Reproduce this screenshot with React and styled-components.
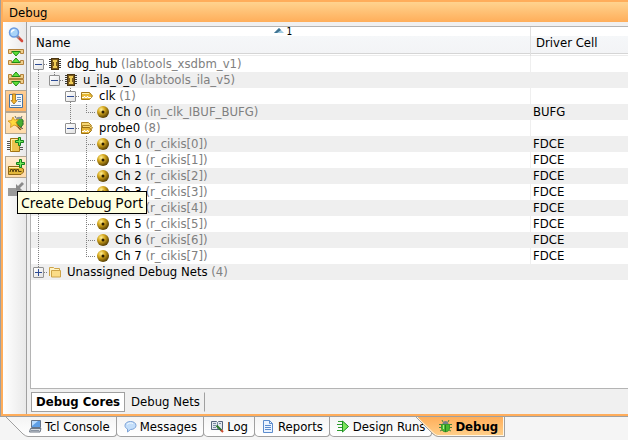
import React, { useState } from "react";
import styled, { createGlobalStyle, css } from "styled-components";

const GlobalStyle = createGlobalStyle`
  *, *::before, *::after { box-sizing: border-box; }
  body {
    margin: 0;
    background: #f5f5f5;
    color: #000;
    font-family: "DejaVu Sans Condensed", "Noto Sans", sans-serif;
    font-size: 13px;
    line-height: 16px;
    overflow: hidden;
  }
  #root { min-height: 100vh; }
`;

const Screen = styled.div`
  height: 100vh;
  display: flex;
  flex-direction: column;
`;

const Panel = styled.section`
  flex: 1;
  min-height: 0;
  display: flex;
  flex-direction: column;
  border-left: 1px solid #a0a0a0;
  border-bottom: 1px solid #a0a0a0;
`;

const Frame = styled.div`
  flex: 1;
  min-height: 0;
  display: flex;
  flex-direction: column;
  border: solid #ffad5b;
  border-width: 2px 0 2px 2px;
`;

const Title = styled.h1`
  margin: 0;
  height: 20px;
  padding: 2px 6px;
  font-size: 13px;
  font-weight: normal;
  line-height: 17px;
  background: linear-gradient(#ffd38f, #ffae5a);
`;

const Body = styled.div`
  flex: 1;
  min-height: 0;
  display: flex;
`;

const Toolbar = styled.nav`
  width: 24px;
  padding: 2px 0 0 2px;
  display: flex;
  flex-direction: column;
  background: linear-gradient(90deg, #fff, #e9e9e9);
  border-right: 1px solid #a0a0a0;
`;

const ToolButton = styled.button`
  height: 22px;
  padding: 0;
  display: flex;
  align-items: center;
  justify-content: center;
  border: 1px solid transparent;
  background: none;
  ${(p) =>
    p.$tone &&
    css`
      border-color: #b5a68f;
      border-right: 0;
      background: ${p.$tone === "pressed" ? "linear-gradient(#ffcf96, #ffb566)" : "linear-gradient(#ffecd0, #ffdba8)"};
    `}
`;

const ToolSlot = styled.div`
  position: relative;
  display: flex;
  flex-direction: column;
`;

const Tooltip = styled.div`
  position: absolute;
  z-index: 2;
  top: 35px;
  left: 12px;
  padding: 0 3px;
  border: 1px solid #000;
  background: #ffffe1;
  font-family: "Noto Sans", sans-serif;
  font-size: 14px;
  line-height: 21px;
  white-space: nowrap;
`;

const Content = styled.main`
  flex: 1;
  min-width: 0;
  display: flex;
  flex-direction: column;
  padding: 4px 0 0 3px;
  background: #f0f0f0;
`;

const TreeBox = styled.div`
  flex: 1;
  min-height: 0;
  overflow: hidden;
  border: solid #b4b4b4;
  border-width: 1px 0 1px 1px;
  background: #fff;
`;

const Table = styled.table`
  width: 100%;
  table-layout: fixed;
  border-collapse: separate;
  border-spacing: 0;
`;

const NameCol = styled.col`
  width: 499px;
`;

const HeadCell = styled.th`
  position: relative;
  height: 29px;
  padding: 6px 5px 2px;
  text-align: left;
  font-weight: normal;
  vertical-align: top;
  background: linear-gradient(#fff 9px, #f5f7f9 9px, #f3f4f6 26px, #d5d5d5 26px, #d5d5d5 27px, #fff 27px, #fff 28px, #ececec 28px);

  & + & {
    border-left: 1px solid #e0e0e0;
  }
`;

const HeadLabel = styled.span`
  display: block;
  line-height: 20px;
`;

const SortMark = styled.span`
  position: absolute;
  top: 0;
  left: 50%;
  display: flex;
  align-items: flex-start;
  gap: 3px;
  margin-left: -7px;
  font-size: 10px;
  line-height: 10px;
`;

const Row = styled.tr`
  height: 16px;
  background: #fff;

  &:nth-child(even) {
    background: #efefef;
  }
`;

const NameCell = styled.td`
  padding: 0;
`;

const DriverCell = styled.td`
  padding: 0 2px;
  line-height: 16px;
  border-left: 1px solid #efefef;
`;

const NameLine = styled.div`
  display: flex;
  height: 16px;
  white-space: pre;
`;

const dots = "repeating-linear-gradient(#808080 0 1px, transparent 1px 2px)";
const hdots = "repeating-linear-gradient(90deg, #808080 0 1px, transparent 1px 2px)";
const lineLength = { blank: "0", line: "100%", end: "9px", start: "8px" };

const Guide = styled.span`
  width: 16px;
  height: 16px;
  flex: none;
  display: flex;
  align-items: center;
  padding-left: 2px;
  background-repeat: no-repeat;
  background-image: ${(p) => (p.$v === "blank" ? "none" : dots)}${(p) => (p.$h ? `, ${hdots}` : "")};
  background-size: 1px ${(p) => lineLength[p.$v]}, 9px 1px;
  background-position: 7px ${(p) => (p.$v === "start" ? "8px" : "0")}, 7px 8px;
`;

const Expander = styled.button`
  width: 11px;
  height: 11px;
  padding: 0;
  display: flex;
  border: 1px solid #919191;
  border-radius: 1px;
  background: linear-gradient(135deg, #fff, #e2e2e2);
`;

const NodeIcon = styled.span`
  width: 16px;
  height: 16px;
  flex: none;
  display: flex;
  align-items: center;
  justify-content: center;
  margin-right: 4px;
`;

const Muted = styled.span`
  color: #808080;
`;

const ViewTabs = styled.div`
  display: flex;
  align-items: center;
  gap: 1px;
  padding: 3px 0 2px 1px;
`;

const ViewTab = styled.button`
  height: 20px;
  padding: 0 4px;
  border: 1px solid transparent;
  border-right-color: #a0a0a0;
  background: none;
  font: inherit;
  line-height: 18px;
  white-space: nowrap;
  ${(p) =>
    p.$active &&
    css`
      border-color: #a0a0a0;
      background: #fff;
      font-weight: bold;
    `}
`;

const DockTabs = styled.div`
  height: 23px;
  display: flex;
  align-items: flex-start;
  padding-left: 6px;
`;

const DockTab = styled.button`
  height: 20px;
  margin-left: -1px;
  padding: 0 6px 0 7px;
  display: flex;
  align-items: center;
  gap: 3px;
  border: 1px solid #a0a0a0;
  border-top: 0;
  border-radius: 0 0 4px 5px;
  background: linear-gradient(#f4f4f4, #fff);
  font: inherit;
  white-space: nowrap;
  ${(p) =>
    p.$slanted &&
    css`
      margin-left: 0;
      border-left: 0;
      border-radius: 0 0 4px 0;
      padding-left: 1px;
    `}
  ${(p) =>
    p.$active &&
    css`
      font-weight: bold;
      border-radius: 0 0 1px 0;
      background: linear-gradient(#ffae5a, #ffd08a);
      box-shadow: inset -1px -1px #fff6e6;
    `}
`;

const SlantSvg = styled.svg`
  flex: none;
  display: block;
  margin-left: ${(p) => (p.$overlap ? "-16px" : "0")};
  z-index: 1;
`;

const Svg = ({ s = 16, w = s, children, ...rest }) => (
  <svg width={w} height={s} viewBox={`0 0 ${w} ${s}`} aria-hidden="true" {...rest}>{children}</svg>
);

const SearchIcon = () => (
  <Svg>
    <path d="M9.500 9.500L14 14" stroke="#d44a3a" strokeWidth="2.600" strokeLinecap="round" />
    <path d="M9 9l2 2" stroke="#8a8f9a" strokeWidth="2" />
    <circle cx="6" cy="5.500" r="4.500" fill="#a9d4f8" stroke="#6c9be0" strokeWidth="1.500" />
    <path d="M3.500 5.500a2.600 2.600 0 0 1 3-2.500" stroke="#fff" strokeWidth="1.500" fill="none" />
  </Svg>
);

const CollapseIcon = () => (
  <Svg>
    <path d="M.5 .5h15v4h-3v-2h-9v2h-3z" fill="#f0cf8c" stroke="#b3823a" />
    <path d="M.5 15.500h15v-4h-3v2h-9v-2h-3z" fill="#f0cf8c" stroke="#b3823a" />
    <path d="M4 2.500h8L8 7z" fill="#5fe03a" stroke="#1f8a14" />
    <path d="M4 13.500h8L8 9z" fill="#5fe03a" stroke="#1f8a14" />
  </Svg>
);

const ExpandIcon = () => (
  <Svg>
    <path d="M.5 3.500h3v2h9v-2h3v4H.5z" fill="#f0cf8c" stroke="#b3823a" />
    <path d="M.5 12.500h3v-2h9v2h3v-4H.5z" fill="#f0cf8c" stroke="#b3823a" />
    <path d="M4 5.500h8L8 1z" fill="#5fe03a" stroke="#1f8a14" />
    <path d="M4 10.500h8L8 15z" fill="#5fe03a" stroke="#1f8a14" />
  </Svg>
);

const SelectIcon = () => (
  <Svg>
    <path d="M1.500 1.500h13v13h-13z" fill="#f4f8fc" stroke="#4675a6" />
    <path d="M9 4.500h4M9 6.500h4M10 8.500h3M3 12.500h10" stroke="#6e93bd" />
    <path d="M4.500 1v6.500H3L6 11l3-3.500H7.500V1z" fill="#f6b82c" stroke="#a36b11" strokeWidth=".8" />
  </Svg>
);

const WandIcon = () => (
  <Svg>
    <path d="M8 3L7 1M13 3l1-2M14 6h2M14 9h2M13 12l2 2" stroke="#68706c" />
    <ellipse cx="11.500" cy="7.500" rx="3.500" ry="5" fill="#48ad31" stroke="#277a20" />
    <path d="M8 4c0-3 6-3 6 0z" fill="#8b929a" />
    <path d="M7 8l6 6.500" stroke="#76501f" strokeWidth="2.400" />
    <path d="M8 9l5 5" stroke="#c99a55" />
    <path d="M5 2l1.500 3 4-.5L8 7.500l2 4-4-1.500-3.500 2.500L3 8.500 0 6l3.500-.5z" fill="#ffd83d" stroke="#cf8e17" strokeWidth=".8" />
  </Svg>
);

const Plus = () => (
  <path d="M11.500 .5h2v3h3v2h-3v3h-2v-3h-3v-2h3z" fill="#6fe85a" stroke="#12801a" />
);

const CoreIcon = () => (
  <Svg w={17}>
    <path d="M0 4.500h3M0 6.500h3M0 8.500h3M0 10.500h3M0 12.500h3M12 10.500h4M12 12.500h4" stroke="#555" />
    <path d="M3.500 1.500h9v13h-9z" fill="#edc34d" stroke="#a27514" />
    <path d="M4.500 14V2.500H10" stroke="#fff0a8" fill="none" />
    <Plus />
  </Svg>
);

const PortIcon = () => (
  <Svg w={17}>
    <path d="M.5 15.500v-8h11l4 2.500v3l-2.500 2.500z" fill="#e2b63b" stroke="#8f6715" />
    <path d="M1 8.500h10" stroke="#fff0a8" />
    <path d="M1.500 12.500h1v-2h2v2h1v-2h2v2h1v-2h2v2h3" stroke="#5b430f" fill="none" />
    <Plus />
  </Svg>
);

const DisabledIcon = () => (
  <Svg>
    <path d="M0 7h8l4 2 4 1v5H0z" fill="#9a9a9a" />
    <path d="M8 9V3l2 2 4-4 2 2-4 4 2 2z" fill="#8a8a8a" />
  </Svg>
);

const ChipIcon = () => (
  <Svg s={14}>
    <path d="M1 2.500h12M1 4.500h12M1 6.500h12M1 8.500h12M1 10.500h12" stroke="#3c3c3c" />
    <path d="M3 1h8v12H3z" fill="#4b3511" />
    <path d="M4 2h6v10H4z" fill="#7a5a1c" />
    <path d="M5 3h4v2H8v4h1v2H5V9h1V5H5z" fill="#f0cc55" />
  </Svg>
);

const ClkIcon = () => (
  <Svg s={14}>
    <path d="M1.500 3.500h8l3 3.500-3 3.500h-8z" fill="#e8b935" stroke="#a47a17" />
    <path d="M2 8.500h2v-1h1v1h2v-1h1v1h3" stroke="#fff" fill="none" />
    <path d="M2 4.500h7" stroke="#fff2ae" />
  </Svg>
);

const ProbeIcon = () => (
  <Svg s={14}>
    <path d="M1.500 1.500h7l3 3-2 2h-8zM2.500 4.500h7l3 2-2 3h-8z" fill="#f7d774" stroke="#b08524" />
    <path d="M1.500 6.500h8l2 3-3 3h-7z" fill="#e6b435" stroke="#9a7014" />
    <path d="M2 10.500h2v-1h1v1h2v-1h1v1h1" stroke="#fff" fill="none" />
  </Svg>
);

const NetIcon = () => (
  <Svg s={14}>
    <defs>
      <radialGradient id="gold" cx=".35" cy=".3" r=".75">
        <stop offset="0" stopColor="#ffef9a" />
        <stop offset=".4" stopColor="#d6a81d" />
        <stop offset="1" stopColor="#4d3600" />
      </radialGradient>
    </defs>
    <circle cx="7" cy="7" r="6" fill="url(#gold)" />
    <circle cx="7" cy="7" r="1.500" fill="#2c1e00" />
  </Svg>
);

const FolderIcon = () => (
  <Svg s={14}>
    <path d="M1.500 11V2.500h4l1 1h5V6" fill="#fff3c4" stroke="#cda348" />
    <path d="M3.500 5.500h9v6.500h-9z" fill="#fbdc87" stroke="#cda348" />
  </Svg>
);

const ConsoleIcon = () => (
  <Svg s={13}>
    <path d="M2.500 .5h9v7h-9z" fill="#5f9fe6" stroke="#66758a" />
    <path d="M3 1h6L3 6z" fill="#b9dcff" />
    <path d="M1.500 8.500h10.500l-1 3.500H.5z" fill="#d5dae0" stroke="#6d7785" />
    <path d="M2 10.500h8" stroke="#8b95a3" />
  </Svg>
);

const MessageIcon = () => (
  <Svg s={13}>
    <path d="M6.500 1.500c3.300 0 5.500 1.700 5.500 4s-2.200 4-5.500 4L3.500 12V9C1.800 8.300 1 7 1 5.500c0-2.300 2.200-4 5.500-4z" fill="#c3defa" stroke="#7ba1d6" />
    <path d="M3 4.500c1-1.500 4-2 6-1" stroke="#f4faff" fill="none" />
  </Svg>
);

const LogIcon = () => (
  <Svg s={13}>
    <path d="M.5 1.500h5l1 1 1-1h4v8H.5z" fill="#e3e8ee" stroke="#56657c" />
    <path d="M6.500 2v7M2 3.500h3M2 5.500h3M2 7.500h3M8 3.500h2" stroke="#7a8ba4" />
    <path d="M5.500 5.500l5 5" stroke="#28752b" strokeWidth="2" />
    <path d="M10 10l2 2" stroke="#c9472d" strokeWidth="2" />
  </Svg>
);

const ReportIcon = () => (
  <Svg s={13}>
    <path d="M1.500 .5h6l3 3v9h-9z" fill="#eaf3ff" stroke="#5c8ccd" />
    <path d="M7.500 .5v3h3M3 5.500h6M3 7.500h6M3 9.500h6" stroke="#5c8ccd" fill="none" />
  </Svg>
);

const RunsIcon = () => (
  <Svg s={13}>
    <path d="M1 1.500h5M0 4.500h5M1 7.500h4M0 10.500h5" stroke="#2c9a2b" />
    <path d="M5.500 1L11.500 6.500l-6 5.500z" fill="#7be65a" stroke="#1c8f22" />
  </Svg>
);

const BugIcon = () => (
  <Svg s={13}>
    <path d="M0 4.500h3M13 4.500h-3M0 7.500h3M13 7.500h-3M1 11l2-1M12 11l-2-1M4 2L3 0M9 2l1-2" stroke="#4b7d3f" />
    <path d="M3.500 4c0-4 6-4 6 0z" fill="#777f88" />
    <path d="M2.500 4.500h8v3.500c0 5-8 5-8 0z" fill="#49b82e" stroke="#3a9a2b" />
    <path d="M6.500 5v7" stroke="#267b1d" />
    <path d="M4.500 5v4" stroke="#a6ee8a" />
  </Svg>
);

const SortIcon = () => (
  <Svg s={8} w={10}>
    <path d="M0 6L5 1l5 5z" fill="#9fcbe2" />
    <path d="M0 6L5 1l2 2-4 3z" fill="#3f7391" />
  </Svg>
);

const tools = [
  { label: "Find", Icon: SearchIcon },
  { label: "Collapse All", Icon: CollapseIcon },
  { label: "Expand All", Icon: ExpandIcon },
  { label: "Scroll to Selected", Icon: SelectIcon, tone: "pressed" },
  { label: "Set Up Debug", Icon: WandIcon, tone: "warm" },
  { label: "Create Debug Core", Icon: CoreIcon },
  { label: "Create Debug Port", Icon: PortIcon, tone: "warm", tip: true },
  { label: "Disconnect Debug Net", Icon: DisabledIcon },
];

const probes = Array.from({ length: 8 }, (_, i) => ({
  guides: ["line", "blank", "blank"],
  last: i === 7 ? "end" : "line",
  Icon: NetIcon,
  name: `Ch ${i}`,
  note: `(r_cikis[${i}])`,
  cell: "FDCE",
}));

const rows = [
  { guides: [], last: "start", toggle: "open", Icon: ChipIcon, name: "dbg_hub", note: "(labtools_xsdbm_v1)" },
  { guides: ["line"], last: "end", toggle: "open", Icon: ChipIcon, name: "u_ila_0_0", note: "(labtools_ila_v5)" },
  { guides: ["line", "blank"], last: "line", toggle: "open", Icon: ClkIcon, name: "clk", note: "(1)" },
  { guides: ["line", "blank", "line"], last: "end", Icon: NetIcon, name: "Ch 0", note: "(in_clk_IBUF_BUFG)", cell: "BUFG" },
  { guides: ["line", "blank"], last: "end", toggle: "open", Icon: ProbeIcon, name: "probe0", note: "(8)" },
  ...probes,
  { guides: [], last: "end", toggle: "closed", Icon: FolderIcon, name: "Unassigned Debug Nets", note: "(4)" },
];

const dockTabs = [
  { label: "Tcl Console", Icon: ConsoleIcon, slanted: true },
  { label: "Messages", Icon: MessageIcon },
  { label: "Log", Icon: LogIcon },
  { label: "Reports", Icon: ReportIcon },
  { label: "Design Runs", Icon: RunsIcon },
  { label: "Debug", Icon: BugIcon, slanted: true },
];

const Slant = ({ active, overlap }) => (
  <SlantSvg width="22" height="20" viewBox="0 0 22 20" $overlap={overlap} aria-hidden="true">
    <defs>
      <linearGradient id={active ? "slantOn" : "slantOff"} x2="0" y2="1">
        <stop offset="0" stopColor={active ? "#ffae5a" : "#f4f4f4"} />
        <stop offset="1" stopColor={active ? "#ffd08a" : "#ffffff"} />
      </linearGradient>
    </defs>
    <path d="M0 0l17 17q3 2.500 5 2.500V0z" fill={`url(#${active ? "slantOn" : "slantOff"})`} />
    {active && <path d="M1 0l17 16.500q2 2 4 2" fill="none" stroke="#fff6e6" />}
    <path d="M0 0l17 17q3 2.500 5 2.500" fill="none" stroke="#a0a0a0" />
  </SlantSvg>
);

function TreeRow({ guides, last, toggle, Icon, name, note, cell }) {
  return (
    <Row>
      <NameCell>
        <NameLine>
          {guides.map((v, i) => <Guide key={i} $v={v} />)}
          <Guide $v={last} $h>
            {toggle && (
              <Expander aria-label={`Toggle ${name}`} aria-expanded={toggle === "open"}>
                <Svg s={9}>
                  <path d={toggle === "open" ? "M1 4.500h7" : "M1 4.500h7M4.500 1v7"} stroke="#2e4c94" />
                </Svg>
              </Expander>
            )}
          </Guide>
          <NodeIcon><Icon /></NodeIcon>
          <span>{name} <Muted>{note}</Muted></span>
        </NameLine>
      </NameCell>
      <DriverCell>{cell}</DriverCell>
    </Row>
  );
}

export default function App() {
  const [view, setView] = useState("Debug Cores");
  const [dock, setDock] = useState("Debug");
  return (
    <Screen>
      <GlobalStyle />
      <Panel>
        <Frame>
          <Title>Debug</Title>
          <Body>
            <Toolbar aria-label="Debug tools">
              {tools.map(({ label, Icon, tone, tip }) => (
                <ToolSlot key={label}>
                  <ToolButton aria-label={label} $tone={tone}><Icon /></ToolButton>
                  {tip && <Tooltip role="tooltip">{label}</Tooltip>}
                </ToolSlot>
              ))}
            </Toolbar>
            <Content>
              <TreeBox>
                <Table>
                  <colgroup><NameCol /><col /></colgroup>
                  <thead>
                    <tr>
                      <HeadCell scope="col">
                        <HeadLabel>Name</HeadLabel>
                        <SortMark><SortIcon />1</SortMark>
                      </HeadCell>
                      <HeadCell scope="col"><HeadLabel>Driver Cell</HeadLabel></HeadCell>
                    </tr>
                  </thead>
                  <tbody>
                    {rows.map((r, i) => <TreeRow key={i} {...r} />)}
                  </tbody>
                </Table>
              </TreeBox>
              <ViewTabs>
                {["Debug Cores", "Debug Nets"].map((t) => (
                  <ViewTab key={t} $active={view === t} onClick={() => setView(t)}>{t}</ViewTab>
                ))}
              </ViewTabs>
            </Content>
          </Body>
        </Frame>
      </Panel>
      <DockTabs>
        {dockTabs.map(({ label, Icon, slanted }, i) => (
          <React.Fragment key={label}>
            {slanted && <Slant active={dock === label} overlap={i > 0} />}
            <DockTab $slanted={slanted} $active={dock === label} onClick={() => setDock(label)}>
              <Icon />{label}
            </DockTab>
          </React.Fragment>
        ))}
      </DockTabs>
    </Screen>
  );
}
